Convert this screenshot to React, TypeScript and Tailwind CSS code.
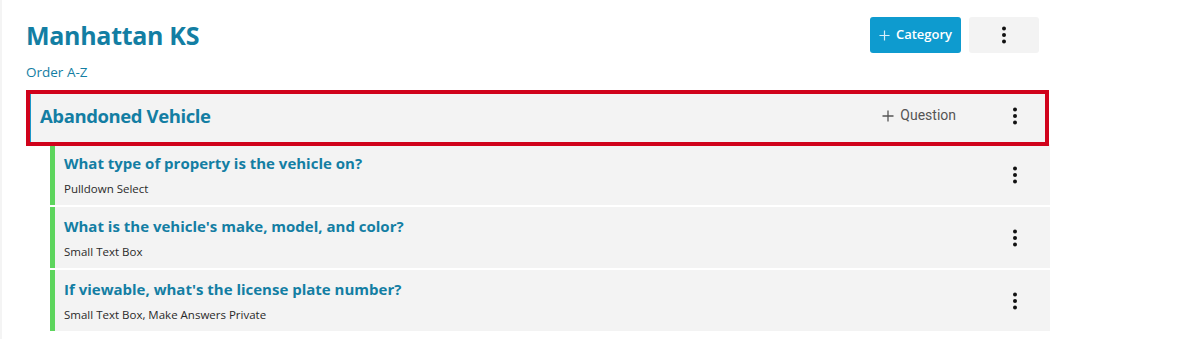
import React from "react";

const Kebab = ({ className = "" }: { className?: string }) => (
  <svg width="6" height="18" viewBox="0 0 6 18" className={className}>
    <circle cx="3" cy="2.5" r="2" fill="#111" />
    <circle cx="3" cy="9" r="2" fill="#111" />
    <circle cx="3" cy="15.5" r="2" fill="#111" />
  </svg>
);

const Plus = ({ color, size = 12 }: { color: string; size?: number }) => (
  <svg width={size} height={size} viewBox="0 0 12 12">
    <path d="M6 0.5V11.5M0.5 6H11.5" stroke={color} strokeWidth="1.3" />
  </svg>
);

const questions = [
  { title: "What type of property is the vehicle on?", sub: "Pulldown Select" },
  { title: "What is the vehicle's make, model, and color?", sub: "Small Text Box" },
  { title: "If viewable, what's the license plate number?", sub: "Small Text Box, Make Answers Private" },
];

export default function App() {
  const font = { fontFamily: "'Open Sans', 'Noto Sans', sans-serif" };
  return (
    <div className="w-[1200px] h-[339px] bg-white border-l-2 border-[#f4f4f4] overflow-hidden" style={font}>
      <div className="ml-[24px] w-[1024px] flex flex-col">
        <div className="mt-[17px] h-[36px] flex items-center justify-between pr-[11px]">
          <h1 className="text-[25px] font-bold text-[#137ea3] leading-none tracking-[-0.3px] mt-[1px]">Manhattan KS</h1>
          <div className="flex gap-[8px]">
            <button className="h-[36px] w-[91px] rounded-[3px] bg-[#0e9bcf] flex items-center justify-center gap-[6px] text-white text-[13px] font-semibold">
              <Plus color="#d8f0fa" size={11} />
              <span>Category</span>
            </button>
            <button className="h-[36px] w-[70px] rounded-[3px] bg-[#f3f3f3] flex items-center justify-center">
              <Kebab />
            </button>
          </div>
        </div>
        <div className="mt-[11px] h-[16px] text-[13.5px] leading-[16px] text-[#137ea3]">Order A-Z</div>
        <div className="mt-[10px] h-[56px] w-[1023px] border-4 border-[#d0021b] relative z-10">
          <div className="h-full bg-[#f3f3f3] border-l border-[#1a96c8] flex items-center pl-[9px] pr-[27px] pb-[5px]">
            <span className="text-[18.5px] font-bold text-[#137ea3] tracking-[-0.4px]">Abandoned Vehicle</span>
            <div className="ml-auto flex items-center gap-[6px] text-[#555]" style={{ fontFamily: "Roboto, sans-serif" }}>
              <Plus color="#555" size={12} />
              <span className="text-[14px]">Question</span>
            </div>
            <Kebab className="ml-[56px]" />
          </div>
        </div>
        <div className="ml-[24px] w-[1000px] flex flex-col gap-[2px] -mt-[2px]">
          {questions.map((q) => (
            <div key={q.title} className="h-[61px] bg-[#f3f3f3] border-l-[5px] border-[#5dd55d] flex items-center pl-[9px] pr-[32px]">
              <div className="flex flex-col">
                <span className="text-[15px] font-bold text-[#137ea3] leading-[20px]">{q.title}</span>
                <span className="text-[11.5px] text-[#2a2a2a] leading-[14px] mt-[9px]">{q.sub}</span>
              </div>
              <Kebab className="ml-auto" />
            </div>
          ))}
        </div>
      </div>
    </div>
  );
}
